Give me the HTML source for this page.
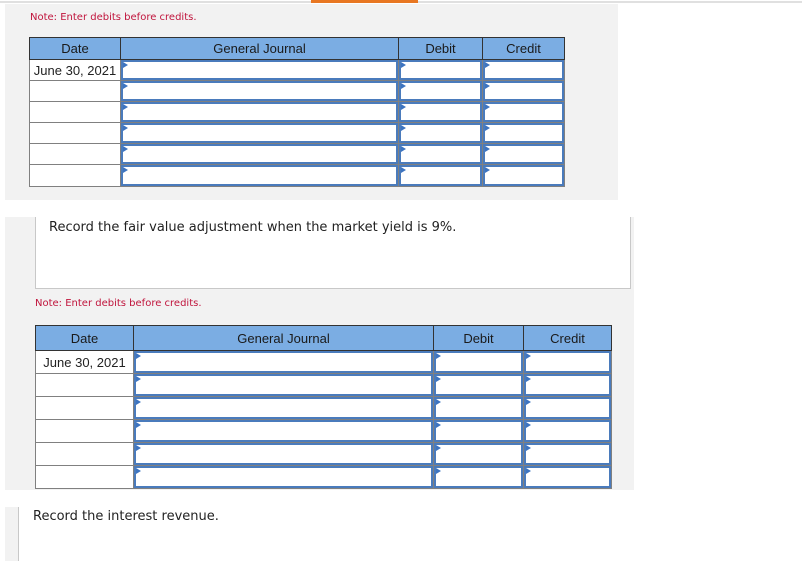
<!DOCTYPE html>
<html><head><meta charset="utf-8"><style>
body{margin:0;width:802px;height:561px;background:#fff;position:relative;overflow:hidden;font-family:"DejaVu Sans","Liberation Sans",sans-serif}
.a{position:absolute}
.note{color:#c0143c;font-size:10px}
table{position:absolute;border-collapse:collapse;table-layout:fixed;font-family:"Liberation Sans",Arial,sans-serif;font-size:13px;color:#222}
th{background:#7badE3;border:1px solid #333;font-weight:normal;padding:0;text-align:center;color:#1a1a1a}
td{border:1px solid #808080;padding:0;background:#fff;position:relative}
td.d{text-align:center;white-space:nowrap}
td.i div{position:absolute;left:0;top:0;right:0;bottom:0;border:2px solid #4a7bbc}
td.i div:before{content:"";position:absolute;left:0;top:0;border-left:5px solid #3d74c0;border-top:3px solid transparent;border-bottom:3px solid transparent}
.txt{font-size:13px;color:#222}
</style></head><body>
<div class="a" style="left:0;top:1px;width:802px;height:2px;background:#e0e0e0"></div>
<div class="a" style="left:311px;top:0;width:107px;height:3px;background:#e87722"></div>
<div class="a" style="left:5px;top:4px;width:613px;height:196px;background:#f2f2f2"></div>
<div class="a note" style="left:30px;top:12px">Note: Enter debits before credits.</div>
<table style="left:29px;top:37px;width:535px">
<colgroup><col style="width:91px"><col style="width:278px"><col style="width:84px"><col style="width:82px"></colgroup>
<tr style="height:22px"><th>Date</th><th>General Journal</th><th>Debit</th><th>Credit</th></tr>
<tr style="height:21px"><td class="d">June 30, 2021</td><td class="i"><div></div></td><td class="i"><div></div></td><td class="i"><div></div></td></tr>
<tr style="height:21px"><td></td><td class="i"><div></div></td><td class="i"><div></div></td><td class="i"><div></div></td></tr>
<tr style="height:21px"><td></td><td class="i"><div></div></td><td class="i"><div></div></td><td class="i"><div></div></td></tr>
<tr style="height:21px"><td></td><td class="i"><div></div></td><td class="i"><div></div></td><td class="i"><div></div></td></tr>
<tr style="height:21px"><td></td><td class="i"><div></div></td><td class="i"><div></div></td><td class="i"><div></div></td></tr>
<tr style="height:22px"><td></td><td class="i"><div></div></td><td class="i"><div></div></td><td class="i"><div></div></td></tr>
</table>

<div class="a" style="left:5px;top:217px;width:629px;height:273px;background:#f2f2f2"></div>
<div class="a" style="left:35px;top:217px;width:594px;height:71px;background:#fff;border:1px solid #c8c8c8;border-top:none"></div>
<div class="a txt" style="left:49px;top:220px">Record the fair value adjustment when the market yield is 9%.</div>
<div class="a note" style="left:35px;top:298px">Note: Enter debits before credits.</div>
<table style="left:35px;top:325px;width:576px">
<colgroup><col style="width:98px"><col style="width:300px"><col style="width:90px"><col style="width:88px"></colgroup>
<tr style="height:25px"><th>Date</th><th>General Journal</th><th>Debit</th><th>Credit</th></tr>
<tr style="height:23px"><td class="d">June 30, 2021</td><td class="i"><div></div></td><td class="i"><div></div></td><td class="i"><div></div></td></tr>
<tr style="height:23px"><td></td><td class="i"><div></div></td><td class="i"><div></div></td><td class="i"><div></div></td></tr>
<tr style="height:23px"><td></td><td class="i"><div></div></td><td class="i"><div></div></td><td class="i"><div></div></td></tr>
<tr style="height:23px"><td></td><td class="i"><div></div></td><td class="i"><div></div></td><td class="i"><div></div></td></tr>
<tr style="height:23px"><td></td><td class="i"><div></div></td><td class="i"><div></div></td><td class="i"><div></div></td></tr>
<tr style="height:23px"><td></td><td class="i"><div></div></td><td class="i"><div></div></td><td class="i"><div></div></td></tr>
</table>

<div class="a" style="left:5px;top:507px;width:13px;height:54px;background:#f2f2f2;border-right:1px solid #c8c8c8"></div>
<div class="a txt" style="left:33px;top:509px">Record the interest revenue.</div>
</body></html>
